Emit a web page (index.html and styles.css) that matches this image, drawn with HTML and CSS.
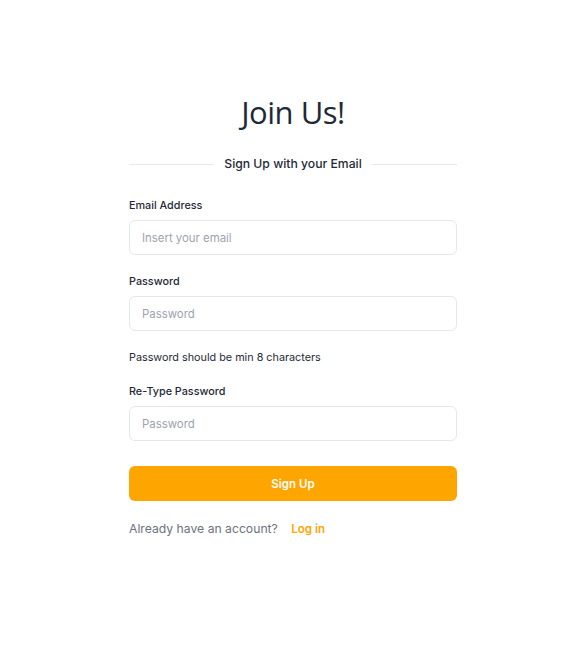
FILE: index.html
```html
<!DOCTYPE html>
<html lang="en">
<head>
<meta charset="utf-8">
<title>Join Us</title>
<link rel="stylesheet" href="styles.css">
</head>
<body>
<main class="page">
  <form class="signup">
    <h1 class="title">Join Us!</h1>
    <div class="divider"><span>Sign Up with your Email</span></div>
    <label class="field">
      <span class="label">Email Address</span>
      <input class="input" type="email" placeholder="Insert your email">
    </label>
    <label class="field">
      <span class="label">Password</span>
      <input class="input" type="password" placeholder="Password">
    </label>
    <p class="hint">Password should be min 8 characters</p>
    <label class="field">
      <span class="label">Re-Type Password</span>
      <input class="input" type="password" placeholder="Password">
    </label>
    <button class="submit" type="button">Sign Up</button>
    <p class="footer">Already have an account? <a class="login" href="#">Log in</a></p>
  </form>
</main>
</body>
</html>
```
FILE: styles.css
```css
* { box-sizing: border-box; }
html, body { margin: 0; background: #ffffff; }
body { font-family: Inter, "Liberation Sans", sans-serif; color: #1f2937; }
.page { display: flex; justify-content: center; padding-top: 91px; padding-right: 2px; }
.signup { width: 328px; display: flex; flex-direction: column; }
.title {
  margin: 0;
  text-align: center;
  font-family: "Open Sans", "Noto Sans", sans-serif;
  font-weight: 400;
  font-size: 31px;
  line-height: 42px;
  color: #1f2937;
  letter-spacing: -0.5px;
}
.divider {
  display: flex; align-items: center; gap: 10px;
  margin-top: 21px;
  font-size: 12.2px; line-height: 20px; color: #1f2937; font-weight: 500;
}
.divider::before, .divider::after { content: ""; flex: 1; height: 1px; background: #e5e7eb; }
.field { display: flex; flex-direction: column; margin-top: 19px; }
.field:first-of-type { margin-top: 24px; }
.label { font-size: 10.8px; line-height: 16px; font-weight: 500; color: #1f2937; margin-bottom: 6px; }
.input {
  height: 35px; border: 1px solid #e5e7eb; border-radius: 6px;
  padding: 0 12px; font-family: inherit; font-size: 11.4px; color: #1f2937;
  background: #fff; outline: none;
}
.input::placeholder { color: #9ca3af; }
.hint { margin: 19px 0 0; font-size: 10.8px; line-height: 16px; color: #1f2937; }
.hint + .field { margin-top: 18px; }
.submit {
  margin-top: 25px; height: 35px; border: 0; border-radius: 6px;
  background: #ffa500; color: #fff; font-family: inherit; font-size: 11.5px; font-weight: 600;
}
.footer { margin: 19px 0 0; font-size: 12.2px; line-height: 18px; color: #6b7280; }
.login { color: #ffa500; font-weight: 600; text-decoration: none; margin-left: 10px; font-size: 11.6px; }
```
